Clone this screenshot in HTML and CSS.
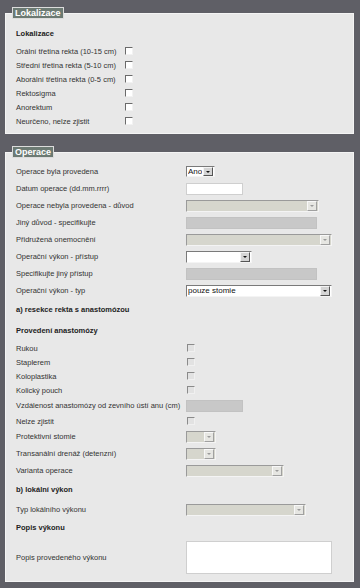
FILE: index.html
```html
<!DOCTYPE html>
<html lang="cs">
<head>
  <meta charset="UTF-8">
  <meta name="viewport" content="width=device-width, initial-scale=1.0">
  <title>Lokalizace a operace</title>
  <link rel="stylesheet" href="styles.css">
</head>
<body>
  <div class="page">

    <!-- Lokalizace -->
    <fieldset class="panel">
      <legend>Lokalizace</legend>
      <div class="rows loc">
        <div class="row head">Lokalizace</div>
        <div class="row chk"><span>Orální třetina rekta (10-15 cm)</span><input type="checkbox"></div>
        <div class="row chk"><span>Střední třetina rekta (5-10 cm)</span><input type="checkbox"></div>
        <div class="row chk"><span>Aborální třetina rekta (0-5 cm)</span><input type="checkbox"></div>
        <div class="row chk"><span>Rektosigma</span><input type="checkbox"></div>
        <div class="row chk"><span>Anorektum</span><input type="checkbox"></div>
        <div class="row chk"><span>Neurčeno, nelze zjistit</span><input type="checkbox"></div>
      </div>
    </fieldset>

    <!-- Operace -->
    <fieldset class="panel">
      <legend>Operace</legend>
      <div class="rows op">
        <div class="row">
          <span>Operace byla provedena</span>
          <div><span class="combo w-ano"><select><option>Ano</option><option>Ne</option></select><span class="btn"></span></span></div>
        </div>
        <div class="row">
          <span>Datum operace (dd.mm.rrrr)</span>
          <div><input type="text" class="field w-57"></div>
        </div>
        <div class="row">
          <span>Operace nebyla provedena - důvod</span>
          <div><span class="combo off w-133"><select disabled><option></option></select><span class="btn"></span></span></div>
        </div>
        <div class="row">
          <span>Jiný důvod - specifikujte</span>
          <div><input type="text" class="field off w-131" disabled></div>
        </div>
        <div class="row">
          <span>Přidružená onemocnění</span>
          <div><span class="combo off w-146"><select disabled><option></option></select><span class="btn"></span></span></div>
        </div>
        <div class="row">
          <span>Operační výkon - přístup</span>
          <div><span class="combo w-66"><select><option></option></select><span class="btn"></span></span></div>
        </div>
        <div class="row">
          <span>Specifikujte jiný přístup</span>
          <div><input type="text" class="field off w-131" disabled></div>
        </div>
        <div class="row">
          <span>Operační výkon - typ</span>
          <div><span class="combo w-146"><select><option>pouze stomie</option></select><span class="btn"></span></span></div>
        </div>

        <div class="row head tall">a) resekce rekta s anastomózou</div>
        <div class="row head">Provedení anastomózy</div>
        <div class="row chk"><span>Rukou</span><input type="checkbox" disabled></div>
        <div class="row chk"><span>Staplerem</span><input type="checkbox" disabled></div>
        <div class="row chk"><span>Koloplastika</span><input type="checkbox" disabled></div>
        <div class="row chk"><span>Kolický pouch</span><input type="checkbox" disabled></div>
        <div class="row">
          <span>Vzdálenost anastomózy od zevního ústí anu (cm)</span>
          <div><input type="text" class="field off w-57" disabled></div>
        </div>
        <div class="row chk"><span>Nelze zjistit</span><input type="checkbox" disabled></div>
        <div class="row">
          <span>Protektivní stomie</span>
          <div><span class="combo off w-30"><select disabled><option></option></select><span class="btn"></span></span></div>
        </div>
        <div class="row">
          <span>Transanální drenáž (detenzní)</span>
          <div><span class="combo off w-30"><select disabled><option></option></select><span class="btn"></span></span></div>
        </div>
        <div class="row">
          <span>Varianta operace</span>
          <div><span class="combo off w-98"><select disabled><option></option></select><span class="btn"></span></span></div>
        </div>

        <div class="row head tall">b) lokální výkon</div>
        <div class="row">
          <span>Typ lokálního výkonu</span>
          <div><span class="combo off w-120"><select disabled><option></option></select><span class="btn"></span></span></div>
        </div>

        <div class="row head">Popis výkonu</div>
        <div class="row memo">
          <span>Popis provedeného výkonu</span>
          <div><textarea class="field w-146"></textarea></div>
        </div>
      </div>
    </fieldset>

  </div>
</body>
</html>
```

FILE: styles.css
```css
body {
  margin: 0;
  background: #5f5f66;
  font-family: "Liberation Sans", Arial, sans-serif;
  font-size: 7.5px;
  color: #333;
}
.page {
  padding: 7px 6px 0 5px;
}

/* panels */
.panel {
  margin: 0 0 12px;
  padding: 5px 6px 5px 6px;
  min-width: 0;
  border: 1px solid #f4f4f4;
  background: #e8e8e8;
}
.panel:last-child {
  margin-bottom: 0;
}
.panel legend {
  padding: 0 2px;
  background: #6c7a73;
  color: #fff;
  font: bold 9px/10px "Liberation Sans", Arial, sans-serif;
  border: 1px solid #dcdcdc;
}

/* rows */
.rows {
  padding-left: 4px;
}
.row {
  display: grid;
  grid-template-columns: 170px 1fr;
  align-items: center;
  height: 17px;
  white-space: nowrap;
}
.loc .row {
  grid-template-columns: 109px 1fr;
}
.row > div {
  display: flex;
  align-items: center;
}
.row.chk {
  height: 14px;
}
.row.head {
  display: block;
  height: 20px;
  line-height: 20px;
  font-weight: bold;
  color: #222;
}
.row.head.tall {
  height: 22px;
  line-height: 22px;
}
.row.memo {
  height: 38px;
}

/* checkboxes */
input[type="checkbox"] {
  appearance: none;
  margin: 0;
  width: 8px;
  height: 8px;
  border: 1px solid;
  border-color: #6a6a6a #f2f2f2 #f2f2f2 #6a6a6a;
  background: #fff;
}
.op input[type="checkbox"] {
  margin-left: 1px;
  border-color: #8a8a8a #f0f0f0 #f0f0f0 #8a8a8a;
  background: #e2e2e2;
}

/* text fields */
.field {
  box-sizing: border-box;
  margin: 0;
  height: 12px;
  padding: 0 2px;
  border: 1px solid #cfcfcf;
  background: #fff;
  font: inherit;
}
.field.off {
  background: #c8c8c8;
  border-color: #c2c2c2;
}
textarea.field {
  height: 33px;
  resize: none;
}

/* selects */
.combo {
  box-sizing: border-box;
  display: inline-flex;
  height: 12px;
  border: 1px solid;
  border-color: #7a7a7a #f4f4f4 #f4f4f4 #7a7a7a;
  background: #fff;
}
.combo select {
  appearance: none;
  flex: 1;
  min-width: 0;
  margin: 0;
  padding: 0 1px;
  border: 0;
  background: transparent;
  color: #111;
  font: 8px/10px "Liberation Sans", Arial, sans-serif;
}
.combo .btn {
  display: flex;
  align-items: center;
  justify-content: center;
  width: 8px;
  margin: 0 1px 0 0;
  border: 1px solid;
  border-color: #f4f4f4 #555 #555 #f4f4f4;
  background: #d4d4d4;
}
.combo .btn::before {
  content: "";
  border-left: 2px solid transparent;
  border-right: 2px solid transparent;
  border-top: 2px solid #111;
}
.combo.off {
  background: #d6d6cd;
  border-color: #9a9a9a #f4f4f4 #f4f4f4 #9a9a9a;
}
.combo.off .btn {
  background: #e6e6e2;
  border-color: #f8f8f8 #a0a0a0 #a0a0a0 #f8f8f8;
}
.combo.off .btn::before {
  border-top-color: #9a9a9a;
}

.w-ano { width: 29px; height: 11px; }
.w-30 { width: 30px; }
.w-57 { width: 57px; }
.w-66 { width: 66px; }
.w-98 { width: 98px; }
.w-120 { width: 120px; }
.w-131 { width: 131px; }
.w-133 { width: 133px; }
.w-146 { width: 146px; }
```
